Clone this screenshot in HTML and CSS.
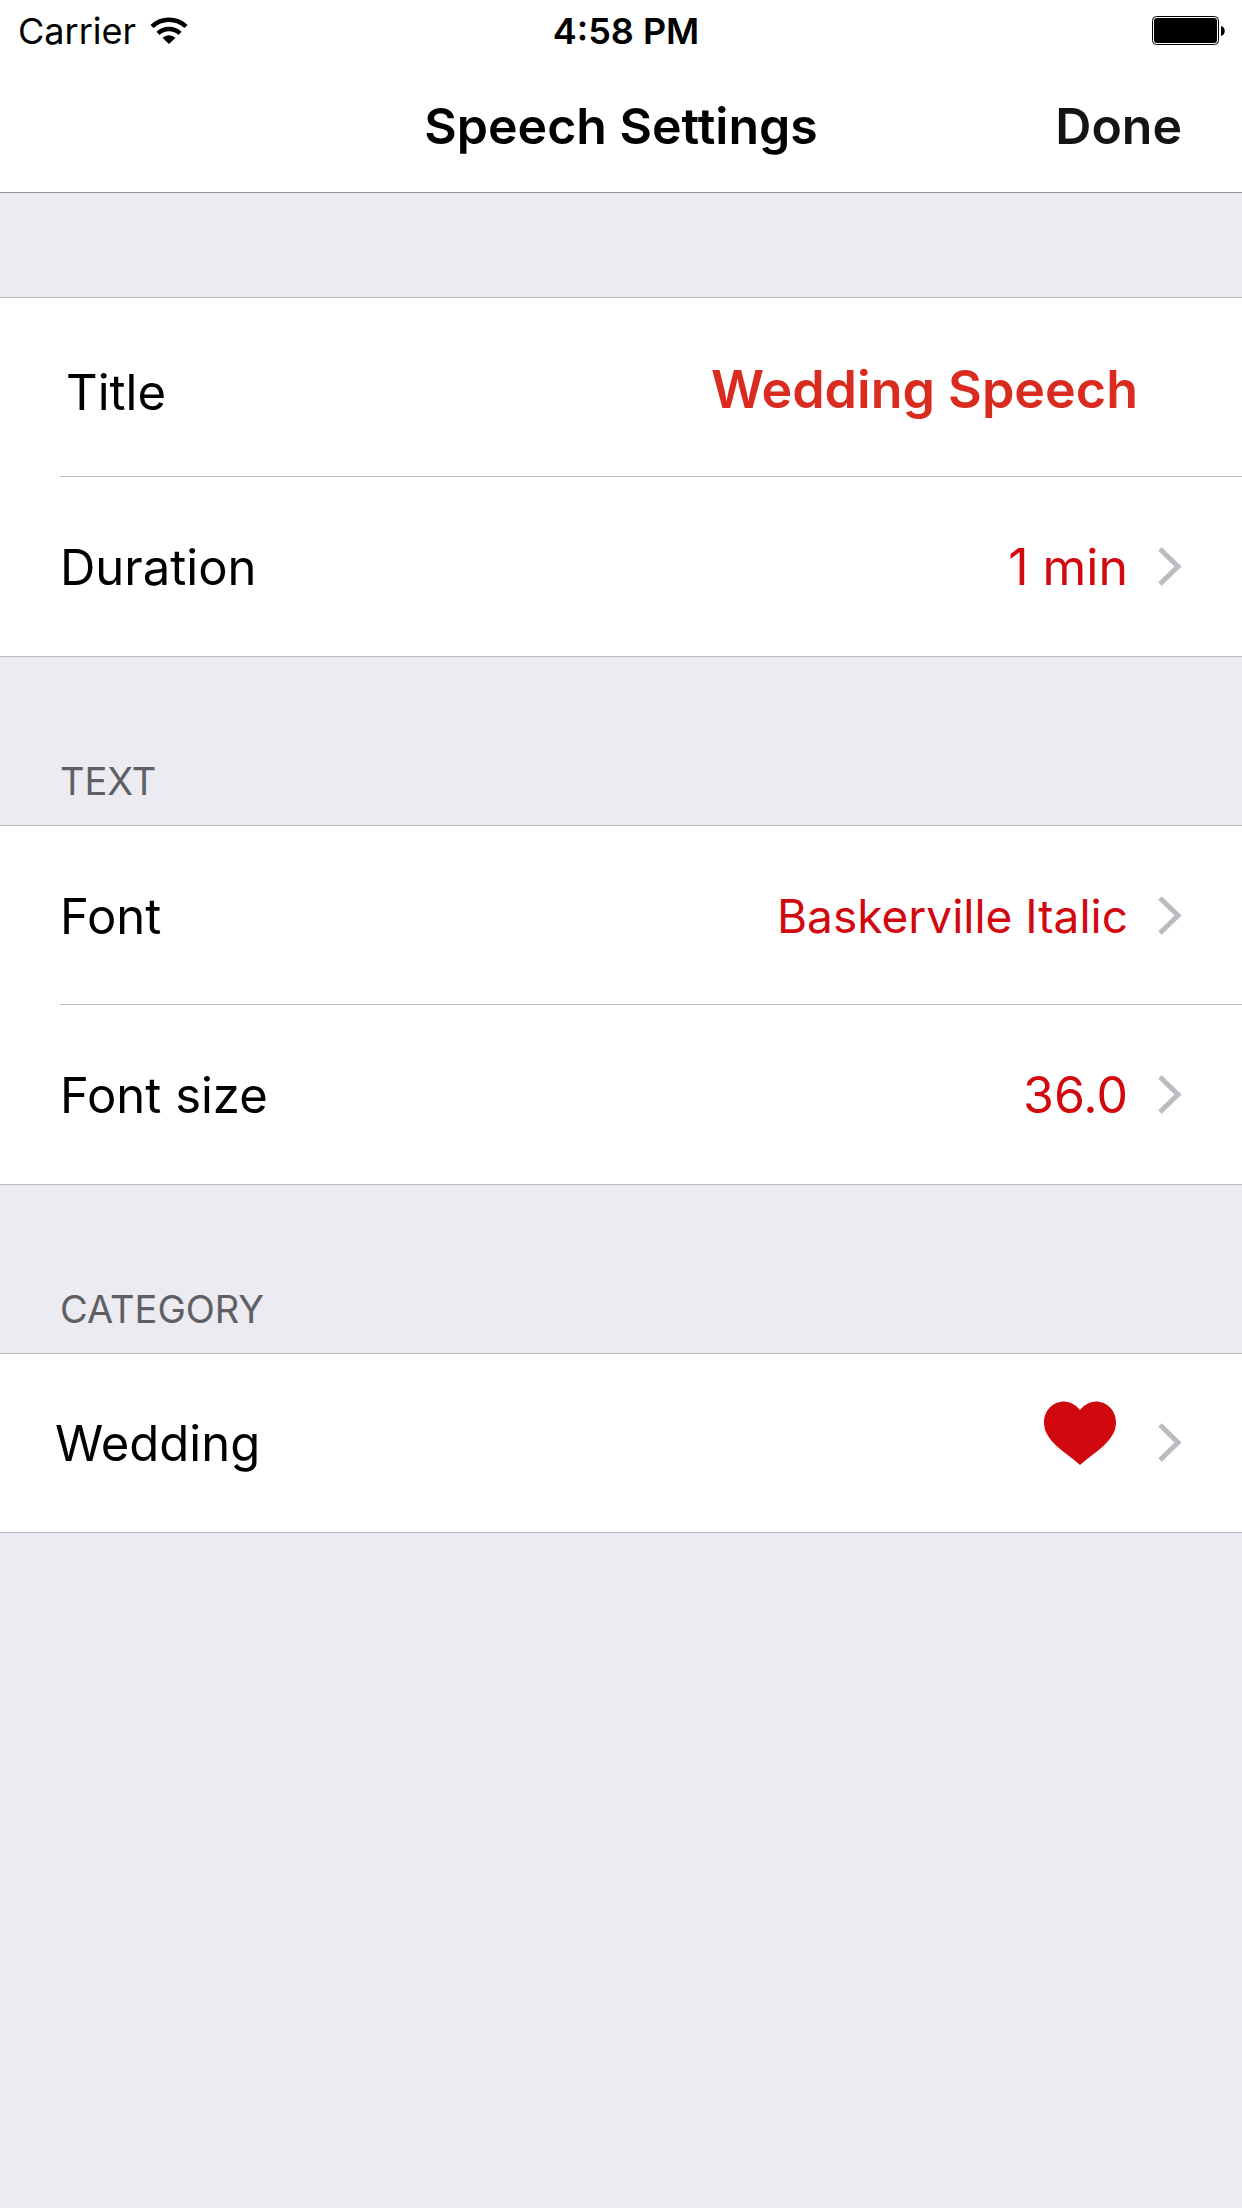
FILE: index.html
```html
<!DOCTYPE html>
<html lang="en">
<head>
    <meta charset="UTF-8">
    <meta name="viewport" content="width=device-width, initial-scale=1.0">
    <title>Speech Settings</title>
    <link rel="stylesheet" href="styles.css">
</head>
<body>
    <header>
        <div class="status-bar">
            <div class="carrier">
                <span>Carrier</span>
                <svg width="38" height="28" viewBox="0 0 38 28" aria-hidden="true">
                    <path d="M2 9.5a24.5 24.5 0 0 1 34 0" fill="none" stroke="#000" stroke-width="4.5"/>
                    <path d="M8 16.3a16 16 0 0 1 22 0" fill="none" stroke="#000" stroke-width="4.5"/>
                    <path d="M12.5 20.7a9.5 9.5 0 0 1 13 0L19 27z"/>
                </svg>
            </div>
            <span class="time">4:58 PM</span>
            <svg class="battery" width="82" height="30" viewBox="0 0 82 30" aria-hidden="true">
                <rect x="0.5" y="0.5" width="66" height="28" rx="4" fill="none" stroke="#000"/>
                <rect x="2" y="2" width="63" height="25" rx="3"/>
                <path d="M69 10c5 1 5 9 0 10z"/>
            </svg>
        </div>
        <div class="nav-bar">
            <h1>Speech Settings</h1>
            <button type="button" class="done">Done</button>
        </div>
    </header>

    <main>
        <section class="group">
            <div class="row row-input">
                <label for="title">Title</label>
                <input type="text" id="title" name="title" value="Wedding Speech">
            </div>
            <a href="#duration" class="row">
                <span class="label">Duration</span>
                <span class="value">1 min</span>
                <svg class="chevron" width="24" height="40" viewBox="0 0 24 40"><path d="M2 2l18 17.5L2 37"/></svg>
            </a>
        </section>

        <h2>TEXT</h2>
        <section class="group">
            <a href="#font" class="row">
                <span class="label">Font</span>
                <span class="value value-small">Baskerville Italic</span>
                <svg class="chevron" width="24" height="40" viewBox="0 0 24 40"><path d="M2 2l18 17.5L2 37"/></svg>
            </a>
            <a href="#font-size" class="row">
                <span class="label">Font size</span>
                <span class="value">36.0</span>
                <svg class="chevron" width="24" height="40" viewBox="0 0 24 40"><path d="M2 2l18 17.5L2 37"/></svg>
            </a>
        </section>

        <h2>CATEGORY</h2>
        <section class="group">
            <a href="#category" class="row row-category">
                <span class="label">Wedding</span>
                <svg class="heart" width="84" height="82" viewBox="0 0 84 82" aria-hidden="true">
                    <path d="M36 8C32 3 26-.5 20-.5 9-.5 0 8.5 0 20.5c0 9 5 16 12 23C19 50 28 55.5 36 63c8-7.5 17-13 24-19.5 7-7 12-14 12-23C72 8.5 63-.5 52-.5c-6 0-12 3.5-16 8.5z"/>
                </svg>
                <svg class="chevron" width="24" height="40" viewBox="0 0 24 40"><path d="M2 2l18 17.5L2 37"/></svg>
            </a>
        </section>
    </main>
</body>
</html>
```

FILE: styles.css
```css
* {
    box-sizing: border-box;
}
body {
    margin: 0;
    font-family: Inter, "Liberation Sans", sans-serif;
    font-size: 50px;
    color: #000;
    background-color: #ebebf1;
}
header {
    background: #fff;
    border-bottom: 1px solid #919196;
    margin-bottom: 104px;
}
.status-bar {
    display: grid;
    grid-template-columns: 1fr auto 1fr;
    align-items: center;
    height: 62px;
    padding: 0 8px 0 18px;
    font-size: 36px;
}
.carrier {
    display: flex;
    align-items: center;
    gap: 14px;
}
.time {
    font-weight: 600;
}
.battery {
    justify-self: end;
}
.nav-bar {
    display: grid;
    grid-template-columns: 1fr auto 1fr;
    align-items: center;
    height: 130px;
    padding: 0 60px 2px;
}
h1 {
    grid-column: 2;
    margin: 0;
    font-size: 50px;
    font-weight: 600;
}
.done {
    justify-self: end;
    padding: 0;
    border: none;
    background: none;
    font: inherit;
    font-weight: 600;
    color: #141414;
    cursor: pointer;
}
h2 {
    display: flex;
    align-items: flex-end;
    height: 168px;
    margin: 0;
    padding: 0 60px 21px;
    font-size: 38px;
    font-weight: 400;
    color: #5f5f64;
}
.group {
    background: #fff;
    border-top: 1px solid #bbbbc0;
    border-bottom: 1px solid #bbbbc0;
}
.row {
    position: relative;
    display: flex;
    align-items: center;
    min-height: 178px;
    padding: 2px 60px 0;
    color: #000;
    text-decoration: none;
}
.row + .row {
    min-height: 180px;
}
/* inset line between rows */
.row + .row::before {
    content: "";
    position: absolute;
    top: 0;
    left: 60px;
    right: 0;
    border-top: 1px solid #bbbbc0;
}
.row-input {
    padding: 10px 104px 0 66px;
}
.row-category {
    padding: 0 60px 0 55px;
}
.row-input input {
    flex: 1;
    min-width: 0;
    padding: 0 0 6px;
    border: none;
    outline: none;
    background: none;
    font: inherit;
    font-size: 52px;
    font-weight: 600;
    text-align: right;
    color: #d92b1f;
}
.label,
.row-input label {
    font-size: 49px;
}
.label {
    flex: 1;
}
.value {
    color: #d1090f;
}
.value-small {
    font-size: 46px;
}
.heart {
    fill: #d1090f;
    overflow: visible;
}
.chevron {
    flex: none;
    margin-left: 30px;
    fill: none;
    stroke: #bbbbc1;
    stroke-width: 5;
}
```
